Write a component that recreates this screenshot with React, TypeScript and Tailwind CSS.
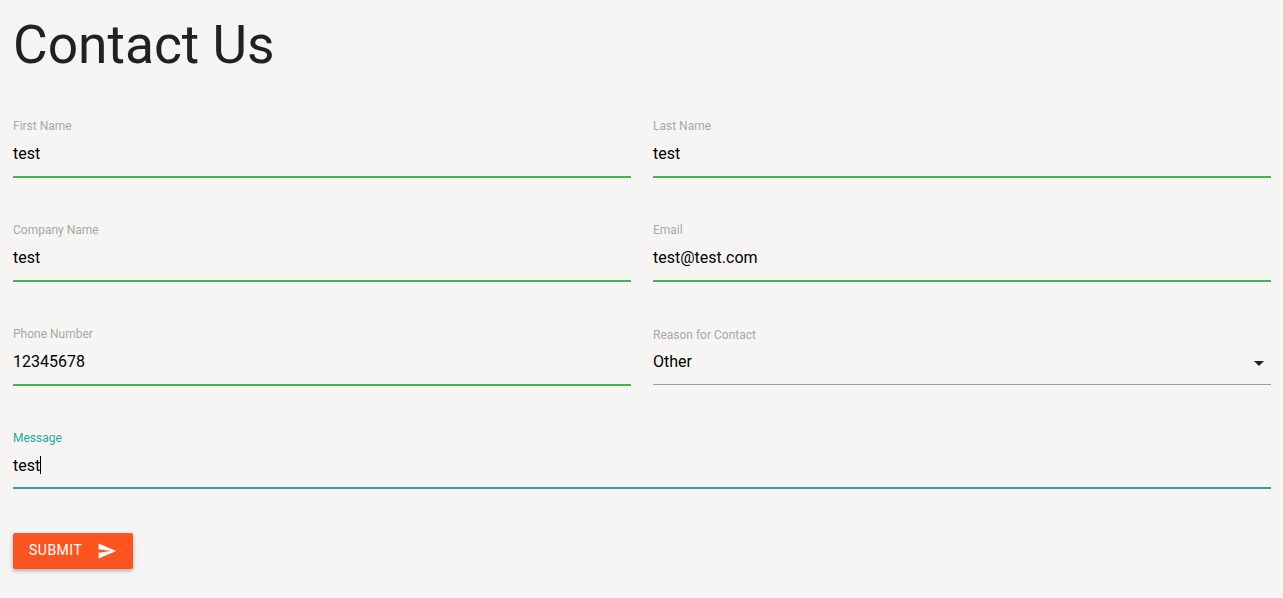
function Field({
  label,
  value,
  labelClass = "text-[#a8a8a8]",
  lineClass = "mt-[7px] h-[2px] bg-[#4caf50]",
  children,
}: {
  label: string;
  value: string;
  labelClass?: string;
  lineClass?: string;
  children?: React.ReactNode;
}) {
  return (
    <div className="h-[72px]">
      <label className={`block h-[14px] text-[12px] leading-[14px] ${labelClass}`}>{label}</label>
      <div className="mt-[4px] flex h-[32px] items-center text-[16px] leading-[19px] text-black">
        {value}
        {children}
      </div>
      <div className={lineClass} />
    </div>
  );
}

export default function App() {
  return (
    <div className="min-h-[598px] bg-[#f6f5f3] pl-[13px] pr-[12px] font-['Roboto',sans-serif]">
      <h1 className="h-[119px] pt-[11px] text-[53.3px] font-normal leading-[68px] text-[#212121]">Contact Us</h1>
      <form className="grid grid-cols-2 gap-x-[22px] gap-y-[32px]">
        <Field label="First Name" value="test" />
        <Field label="Last Name" value="test" />
        <Field label="Company Name" value="test" />
        <Field label="Email" value="test@test.com" />
        <Field label="Phone Number" value="12345678" />
        <div className="relative">
          <Field
            label="Reason for Contact"
            value="Other"
            labelClass="translate-y-px text-[#a8a8a8]"
            lineClass="mt-[7px] h-[1px] bg-[#9e9e9e]"
          />
          <svg viewBox="0 0 24 24" className="absolute right-0 top-[24px] h-6 w-6 fill-[#212121]">
            <path d="M7 10l5 5 5-5z" />
          </svg>
        </div>
        <div className="col-span-2">
          <Field label="Message" value="test" labelClass="text-[#26a9a0]" lineClass="mt-[6px] h-[2px] bg-[#26a69a]">
            <span className="h-[18px] w-px bg-black" />
          </Field>
        </div>
      </form>
      <button
        type="button"
        className="mt-[30px] flex h-[36px] w-[120px] items-center rounded-[2px] bg-[#fc5420] pb-[2px] pl-[16px] text-[14px] leading-[16px] tracking-[0.5px] text-white shadow-[0_2px_4px_rgba(0,0,0,0.3)]"
      >
        SUBMIT
        <svg viewBox="0 0 24 24" className="ml-[15px] mt-[2px] h-5 w-5 fill-white">
          <path d="M2.01 21L23 12 2.01 3 2 10l15 2-15 2z" />
        </svg>
      </button>
    </div>
  );
}
